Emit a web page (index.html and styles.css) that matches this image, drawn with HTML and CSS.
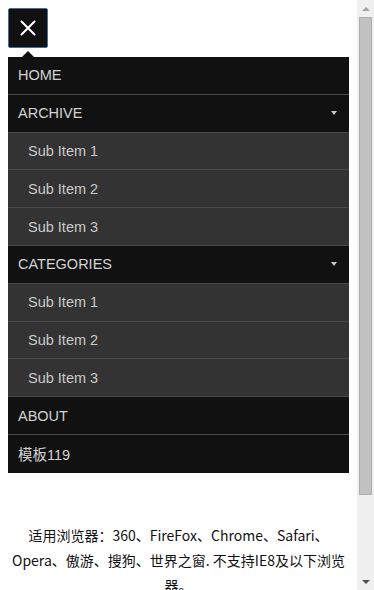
FILE: index.html
```html
<!DOCTYPE html>
<html lang="zh-CN">
<head>
<meta charset="utf-8">
<title>模板119</title>
<link rel="stylesheet" href="styles.css">
</head>
<body>
<button class="toggle" type="button" aria-label="Close menu">
  <svg width="16" height="16" viewBox="0 0 16 16"><path d="M1 1L15 15M15 1L1 15" stroke="#fff" stroke-width="2" fill="none"/></svg>
</button>
<nav class="menu">
  <a class="item top" href="#">HOME</a>
  <a class="item top has-sub" href="#">ARCHIVE<span class="caret"></span></a>
  <a class="item sub" href="#">Sub Item 1</a>
  <a class="item sub" href="#">Sub Item 2</a>
  <a class="item sub" href="#">Sub Item 3</a>
  <a class="item top has-sub" href="#">CATEGORIES<span class="caret"></span></a>
  <a class="item sub" href="#">Sub Item 1</a>
  <a class="item sub" href="#">Sub Item 2</a>
  <a class="item sub" href="#">Sub Item 3</a>
  <a class="item top" href="#">ABOUT</a>
  <a class="item top last" href="#">模板119</a>
</nav>
<p class="note">适用浏览器：360、FireFox、Chrome、Safari、Opera、傲游、搜狗、世界之窗. 不支持IE8及以下浏览器。</p>
<div class="scrollbar" aria-hidden="true">
  <span class="sb-btn"><span class="sb-arrow up"></span></span>
  <span class="sb-track"><span class="sb-thumb"></span></span>
  <span class="sb-btn"><span class="sb-arrow down"></span></span>
</div>
</body>
</html>
```
FILE: styles.css
```css
html, body {
  background: #fff;
}
html {
  padding-right: 17px;
}
body {
  margin: 8px;
  padding-bottom: 79px;
  font-family: "Liberation Sans", Arial, "Noto Sans CJK SC", sans-serif;
}
.toggle {
  display: flex;
  align-items: center;
  justify-content: center;
  width: 40px;
  height: 40px;
  padding: 0;
  margin: 0;
  background: #111;
  border: 1px solid #4a6a98;
  border-radius: 2px;
}
.menu {
  position: relative;
  display: flex;
  flex-direction: column;
  margin-top: 9px;
  background: #111;
}
.menu::before {
  content: "";
  position: absolute;
  left: 14px;
  top: -6px;
  border-left: 6px solid transparent;
  border-right: 6px solid transparent;
  border-bottom: 6px solid #111;
}
.item {
  display: flex;
  align-items: center;
  justify-content: space-between;
  height: 36.8px;
  border-bottom: 1px solid #4a4a4a;
  text-decoration: none;
  font-size: 14.5px;
}
.top {
  background: #111;
  color: #d2d2d2;
  padding: 0 12px 0 10px;
}
.sub {
  background: #333;
  color: #cacaca;
  padding: 0 12px 0 20px;
}
.last {
  border-bottom-color: #111;
}
.caret {
  width: 0;
  height: 0;
  border-left: 3.5px solid transparent;
  border-right: 3.5px solid transparent;
  border-top: 4px solid #c8c8c8;
}
.note {
  margin: 50px 0 0;
  text-align: center;
  font-family: "Noto Sans CJK SC", sans-serif;
  font-size: 14px;
  line-height: 25px;
  color: #111;
}
/* decorative classic scrollbar overlay */
.scrollbar {
  position: fixed;
  top: 0;
  right: 0;
  bottom: 0;
  width: 17px;
  display: flex;
  flex-direction: column;
  background: #f0f0f0;
}
.sb-btn {
  flex: 0 0 17px;
  display: flex;
  align-items: center;
  justify-content: center;
}
.sb-track {
  flex: 1;
  display: flex;
  flex-direction: column;
  padding: 0 2px;
}
.sb-thumb {
  height: 86%;
  background: #c1c1c1;
  border: 1px solid #adadad;
  box-sizing: border-box;
}
.sb-arrow {
  width: 0;
  height: 0;
  border-left: 4px solid transparent;
  border-right: 4px solid transparent;
}
.sb-arrow.up {
  border-bottom: 4px solid #a3a3a3;
}
.sb-arrow.down {
  border-top: 4px solid #505050;
}
```
